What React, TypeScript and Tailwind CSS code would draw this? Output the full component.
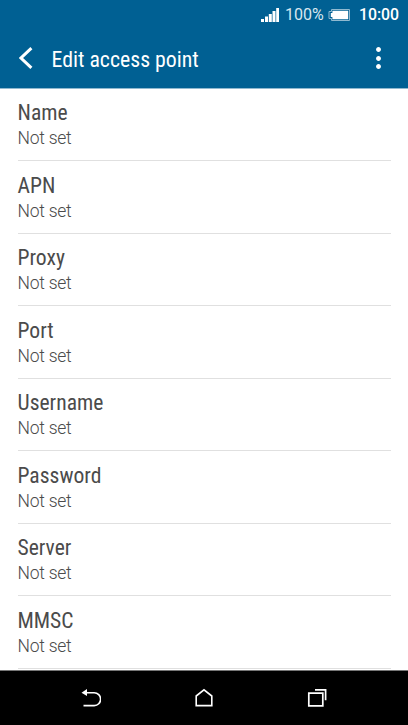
import { FaCircle } from "react-icons/fa";

const FIELDS = ["Name", "APN", "Proxy", "Port", "Username", "Password", "Server", "MMSC"];

const condensed = "font-['Roboto_Condensed','Roboto',sans-serif] [font-stretch:75%]";

function SignalIcon() {
  return (
    <svg width="18" height="14" viewBox="0 0 18 14" fill="#fff">
      <path d="M0 11h3v3H0zM4 8.5h3V14H4zM7.8 6h3v8h-3zM11.5 3h3v11h-3zM15.2 0h2.8v14h-2.8z" />
    </svg>
  );
}

function BatteryIcon() {
  return (
    <svg width="22" height="12" viewBox="0 0 22 12" fill="none">
      <path d="M3.5 .5h18v11h-18V9.5h-2.5v-7h2.5z" stroke="#8fb9d0" strokeWidth="1" />
      <path d="M4.4 1.8h15.8v8.4H4.4V8H2.8V4h1.6z" fill="#fff" />
    </svg>
  );
}

function StatusBar() {
  return (
    <div className="flex h-[30px] items-center pl-[261px] text-base leading-none text-white">
      <SignalIcon />
      <span className="ml-[6px] w-[39px] whitespace-nowrap text-[#d9e7ef]">100%</span>
      <span className="ml-[4px]">
        <BatteryIcon />
      </span>
      <span className="ml-[9px] text-[15.8px] font-medium whitespace-nowrap">10:00</span>
    </div>
  );
}

function Header() {
  return (
    <header className="h-[89px] shrink-0 border-b border-[#8fb9d0] bg-[#006093]">
      <StatusBar />
      <div className="flex h-[56px] items-center pr-[27px] pl-[19px] text-white">
        <svg width="14" height="22" viewBox="0 0 14 22" fill="none" stroke="#fff" strokeWidth="3">
          <path d="M12.4 1.2 2 11l10.4 9.8" />
        </svg>
        <h1 className={`mt-[4px] ml-[18.5px] flex-1 text-[21.8px] leading-none ${condensed}`}>Edit access point</h1>
        <div className="flex flex-col gap-[3.7px]">
          {[0, 1, 2].map((i) => (
            <FaCircle key={i} size={5} />
          ))}
        </div>
      </div>
    </header>
  );
}

function FieldRow({ label }: { label: string }) {
  return (
    <li className="flex h-[72.5px] shrink-0 flex-col border-b border-[#e0e0e0] pt-[11.5px] first:h-[72px] first:pt-[11px]">
      <span className={`text-[21.6px] leading-[26px] text-[#4b4b4b] ${condensed}`}>{label}</span>
      <span className="text-[17.5px] leading-[24px] font-light tracking-[-0.25px] text-[#4b4b4b]">Not set</span>
    </li>
  );
}

function NavBar() {
  return (
    <nav className="flex h-[55px] shrink-0 items-center justify-between border-t border-[#777] bg-black px-[81px]">
      <svg width="20" height="20" viewBox="0 0 20 20" fill="none" stroke="#fff" strokeWidth="1.6">
        <path d="M5 4.8h8.2a6.4 6.4 0 0 1 0 12.8H2.5" />
        <path d="M.5 4.8 6 1v7z" fill="#fff" stroke="none" />
      </svg>
      <svg width="18" height="20" viewBox="0 0 18 20" fill="none" stroke="#fff" strokeWidth="1.6">
        <path d="M1.2 8 9 1.8 16.8 8v9.6H1.2z" />
      </svg>
      <svg width="20" height="20" viewBox="0 0 20 20" fill="none" stroke="#fff" strokeWidth="1.7">
        <path d="M1.8 5.2h14v12.6h-14zM8 1.8h10.6v10.4" />
      </svg>
    </nav>
  );
}

export default function App() {
  return (
    <div className="flex h-[725px] w-[408px] flex-col overflow-hidden bg-white font-['Roboto',sans-serif]">
      <Header />
      <ul className="flex min-h-0 flex-1 flex-col overflow-hidden px-[17.5px]">
        {FIELDS.map((label) => (
          <FieldRow key={label} label={label} />
        ))}
      </ul>
      <NavBar />
    </div>
  );
}
